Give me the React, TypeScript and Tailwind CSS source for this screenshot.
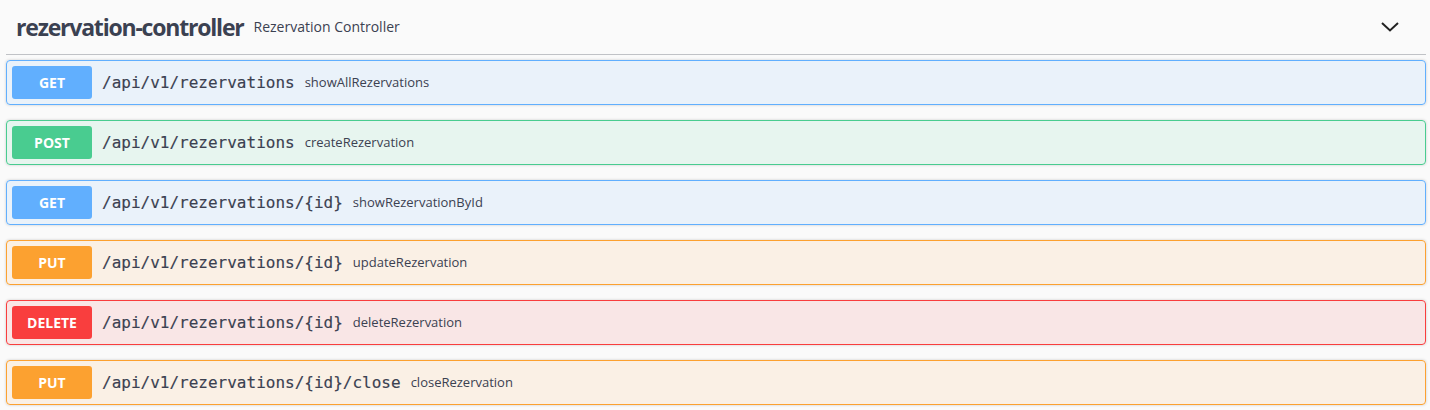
import React from "react";

type Op = { method: string; path: string; summary: string };

const ops: Op[] = [
  { method: "GET", path: "/api/v1/rezervations", summary: "showAllRezervations" },
  { method: "POST", path: "/api/v1/rezervations", summary: "createRezervation" },
  { method: "GET", path: "/api/v1/rezervations/{id}", summary: "showRezervationById" },
  { method: "PUT", path: "/api/v1/rezervations/{id}", summary: "updateRezervation" },
  { method: "DELETE", path: "/api/v1/rezervations/{id}", summary: "deleteRezervation" },
  { method: "PUT", path: "/api/v1/rezervations/{id}/close", summary: "closeRezervation" },
];

const styles: Record<string, { block: string; badge: string }> = {
  GET: {
    block: "border-[#61affe] bg-[rgba(97,175,254,0.1)]",
    badge: "bg-[#61affe]",
  },
  POST: {
    block: "border-[#49cc90] bg-[rgba(73,204,144,0.1)]",
    badge: "bg-[#49cc90]",
  },
  PUT: {
    block: "border-[#fca130] bg-[rgba(252,161,48,0.1)]",
    badge: "bg-[#fca130]",
  },
  DELETE: {
    block: "border-[#f93e3e] bg-[rgba(249,62,62,0.1)]",
    badge: "bg-[#f93e3e]",
  },
};

export default function App() {
  return (
    <div className="min-h-[410px] w-[1430px] bg-[#fafafa] text-[#3b4151] font-['Open_Sans',sans-serif]">
      <div className="ml-[6px] mr-[4px]">
        <div className="flex h-[55px] items-center border-b border-[rgba(59,65,81,0.3)] pl-[10px] pr-[26px]">
          <span className="font-['Open_Sans',sans-serif] text-[23px] font-bold tracking-[-1.2px] leading-none">
            rezervation-controller
          </span>
          <span className="ml-[10px] text-[14px] leading-none">Rezervation Controller</span>
          <div className="ml-auto">
            <svg width="20" height="20" viewBox="0 0 20 20">
              <path d="M2 6 L10 13.5 L18 6" fill="none" stroke="#222" strokeWidth="2" />
            </svg>
          </div>
        </div>
        <div className="mt-[5px] flex flex-col gap-[15px]">
          {ops.map((op, i) => {
            const s = styles[op.method];
            return (
              <div
                key={i}
                className={`flex h-[45px] items-center rounded-[4px] border px-[5px] shadow-[0_0_3px_rgba(0,0,0,0.19)] ${s.block}`}
              >
                <div
                  className={`flex h-[33px] w-[80px] items-center justify-center rounded-[3px] text-[14px] font-bold text-white ${s.badge}`}
                >
                  {op.method}
                </div>
                <span className="px-[10px] font-['DejaVu_Sans_Mono',monospace] text-[16px] font-normal [-webkit-text-stroke:0.15px_#3b4151]">
                  {op.path}
                </span>
                <span className="text-[13px]">{op.summary}</span>
              </div>
            );
          })}
        </div>
      </div>
    </div>
  );
}
